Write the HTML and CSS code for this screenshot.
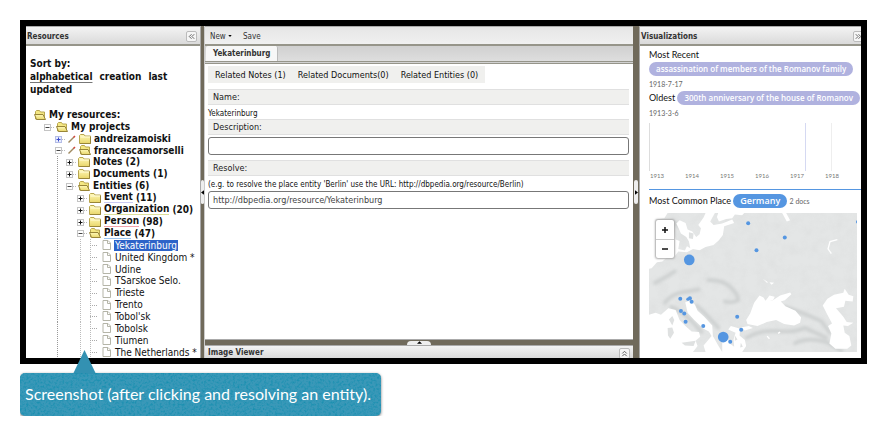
FILE: index.html
```html
<!DOCTYPE html>
<html lang="en">
<head>
<meta charset="utf-8">
<title>Yekaterinburg</title>
<link rel="stylesheet" href="styles.css">
</head>
<body>
<svg class="defs" aria-hidden="true">
  <defs>
    <linearGradient id="fold" x1="0" y1="0" x2="0" y2="1"><stop offset="0" stop-color="#fff9b8"/><stop offset="1" stop-color="#e8d66a"/></linearGradient>
    <symbol id="closed" viewBox="0 0 12 10"><path d="M.5 9.500V1.500L1.500.5H5L6 2H11.500V9.500Z" fill="url(#fold)" stroke="#b8a650"/><path d="M1.500 3H11" stroke="#fffbd8"/><path d="M1 9.500H11.500V3" fill="none" stroke="#988538"/></symbol>
    <symbol id="open" viewBox="0 0 12 10"><path d="M1.500 9V1.500L2.500.5H5.500L6.500 2H10.500V9Z" fill="#f4e782" stroke="#b8a650"/><path d="M.5 4.500H9L11.500 9.500H2.500Z" fill="url(#fold)" stroke="#988538"/></symbol>
    <symbol id="page" viewBox="0 0 10 10"><path d="M1 .5H6L8.500 3V9.500H1Z" fill="#fff" stroke="#b5b5a8"/><path d="M5.500.5V3.500H8.500" fill="none" stroke="#b5b5a8"/></symbol>
    <symbol id="plus" viewBox="0 0 12 10"><path d="M8 5.500H12" stroke="#bbb" stroke-dasharray="1 1"/><rect x="1.500" y="2.500" width="6" height="6" fill="#fff" stroke="#c4c4c4"/><path d="M2.500 5.500H6.500M4.500 3.500V7.500" stroke="#111"/></symbol>
    <symbol id="plusblue" viewBox="0 0 12 10"><path d="M8 5.500H12" stroke="#bbb" stroke-dasharray="1 1"/><rect x="1.500" y="2.500" width="6" height="6" fill="#e8ecff" stroke="#b4bde6"/><path d="M2.500 5.500H6.500M4.500 3.500V7.500" stroke="#3a4ccc"/></symbol>
    <symbol id="minus" viewBox="0 0 12 10"><path d="M8 5.500H12" stroke="#bbb" stroke-dasharray="1 1"/><rect x="1.500" y="2.500" width="6" height="6" fill="#fff" stroke="#c4c4c4"/><path d="M2.500 5.500H6.500" stroke="#444"/></symbol>
    <symbol id="dots" viewBox="0 0 12 10"><path d="M1 5.500H9" stroke="#aaa" stroke-dasharray="1 1"/></symbol>
    <symbol id="pencil" viewBox="0 0 10 10"><path d="M1.500 8.500L7 3" stroke="#a08a60" stroke-width="1.500"/><path d="M6.500 3.500L8 2" stroke="#d6453c" stroke-width="1.500"/></symbol>
  </defs>
</svg>

<main class="frame">
  <aside class="panel resources">
    <header class="bar"><h2>Resources</h2><button class="tool" aria-label="Collapse resources"><svg viewBox="0 0 10 10"><path d="M5 2.500L2.500 5L5 7.500M8 2.500L5.500 5L8 7.500"/></svg></button></header>
    <div class="sort">Sort by:<br><a class="current" href="#">alphabetical</a><a href="#">creation</a><a href="#">last updated</a></div>
    <ul class="tree">
      <li class="l0"><svg class="f"><use href="#open"/></svg>My resources:</li>
      <li class="l1"><svg class="e"><use href="#minus"/></svg><svg class="f"><use href="#open"/></svg>My projects</li>
      <li class="l2"><svg class="e"><use href="#plusblue"/></svg><svg class="p"><use href="#pencil"/></svg><svg class="f"><use href="#closed"/></svg>andreizamoiski</li>
      <li class="l2"><svg class="e"><use href="#minus"/></svg><svg class="p"><use href="#pencil"/></svg><svg class="f"><use href="#open"/></svg>francescamorselli</li>
      <li class="l3"><svg class="e"><use href="#plus"/></svg><svg class="f"><use href="#closed"/></svg>Notes (2)</li>
      <li class="l3"><svg class="e"><use href="#plus"/></svg><svg class="f"><use href="#closed"/></svg>Documents (1)</li>
      <li class="l3"><svg class="e"><use href="#minus"/></svg><svg class="f"><use href="#open"/></svg>Entities (6)</li>
      <li class="l4"><svg class="e"><use href="#plus"/></svg><svg class="f"><use href="#closed"/></svg><span class="kind event">Event</span>&nbsp;(11)</li>
      <li class="l4"><svg class="e"><use href="#plus"/></svg><svg class="f"><use href="#closed"/></svg><span class="kind organization">Organization</span>&nbsp;(20)</li>
      <li class="l4"><svg class="e"><use href="#plus"/></svg><svg class="f"><use href="#closed"/></svg><span class="kind person">Person</span>&nbsp;(98)</li>
      <li class="l4"><svg class="e"><use href="#minus"/></svg><svg class="f"><use href="#open"/></svg><span class="kind place">Place</span>&nbsp;(47)</li>
      <li class="l5"><svg class="e"><use href="#dots"/></svg><svg class="p"><use href="#page"/></svg><span class="selected">Yekaterinburg</span></li>
      <li class="l5"><svg class="e"><use href="#dots"/></svg><svg class="p"><use href="#page"/></svg><span>United Kingdom *</span></li>
      <li class="l5"><svg class="e"><use href="#dots"/></svg><svg class="p"><use href="#page"/></svg><span>Udine</span></li>
      <li class="l5"><svg class="e"><use href="#dots"/></svg><svg class="p"><use href="#page"/></svg><span>TSarskoe Selo.</span></li>
      <li class="l5"><svg class="e"><use href="#dots"/></svg><svg class="p"><use href="#page"/></svg><span>Trieste</span></li>
      <li class="l5"><svg class="e"><use href="#dots"/></svg><svg class="p"><use href="#page"/></svg><span>Trento</span></li>
      <li class="l5"><svg class="e"><use href="#dots"/></svg><svg class="p"><use href="#page"/></svg><span>Tobol'sk</span></li>
      <li class="l5"><svg class="e"><use href="#dots"/></svg><svg class="p"><use href="#page"/></svg><span>Tobolsk</span></li>
      <li class="l5"><svg class="e"><use href="#dots"/></svg><svg class="p"><use href="#page"/></svg><span>Tiumen</span></li>
      <li class="l5"><svg class="e"><use href="#dots"/></svg><svg class="p"><use href="#page"/></svg><span>The Netherlands *</span></li>
    </ul>
  </aside>
  <div class="split left"><button class="grip" aria-label="Collapse left"><svg viewBox="0 0 4 6"><path d="M4 0V6L0 3Z"/></svg></button></div>

  <section class="center">
    <div class="bar menu"><button>New <svg viewBox="0 0 5 3"><path d="M0 0H5L2.500 3Z"/></svg></button><button>Save</button></div>
    <div class="tabs"><button class="tab">Yekaterinburg</button></div>
    <form class="editor">
      <div class="related"><button type="button">Related Notes (1)</button><button type="button">Related Documents(0)</button><button type="button">Related Entities (0)</button></div>
      <div class="label name">Name:</div>
      <div class="value">Yekaterinburg</div>
      <label class="label" for="description">Description:</label>
      <input id="description" type="text">
      <label class="label" for="resolve">Resolve:</label>
      <div class="hint">(e.g. to resolve the place entity 'Berlin' use the URL: http://dbpedia.org/resource/Berlin)</div>
      <input id="resolve" type="text" value="http://dbpedia.org/resource/Yekaterinburg">
    </form>
    <div class="hsplit"><button class="grip" aria-label="Expand image viewer"><svg viewBox="0 0 6 3"><path d="M0 3H6L3 0Z"/></svg></button></div>
    <div class="bar viewer"><h2>Image Viewer</h2><button class="tool" aria-label="Open image viewer"><svg viewBox="0 0 10 10"><path d="M2.500 5L5 2.500L7.500 5M2.500 8L5 5.500L7.500 8"/></svg></button></div>
  </section>
  <div class="split right"><button class="grip" aria-label="Collapse right"><svg viewBox="0 0 4 6"><path d="M0 0V6L4 3Z"/></svg></button></div>

  <aside class="panel visual">
    <header class="bar"><h2>Visualizations</h2><button class="tool" aria-label="Collapse visualizations"><svg viewBox="0 0 10 10"><path d="M2 2.500L4.500 5L2 7.500M5 2.500L7.500 5L5 7.500"/></svg></button></header>
    <div class="facts">
      <div class="line">Most Recent</div>
      <div class="line"><a class="pill" href="#">assassination of members of the Romanov family</a></div>
      <div class="date">1918-7-17</div>
      <div class="line">Oldest <a class="pill" href="#">300th anniversary of the house of Romanov</a></div>
      <div class="date last">1913-3-6</div>
      <div class="chart"><i></i><b></b><i></i></div>
      <div class="years"><span>1913</span><span>1914</span><span>1915</span><span>1916</span><span>1917</span><span>1918</span></div>
    </div>
    <div class="facts places">
      <div class="line">Most Common Place <a class="pill blue" href="#">Germany</a> <small>2 docs</small></div>
      <div class="map">
        <svg viewBox="42 40 625 418" preserveAspectRatio="xMidYMid slice" role="img" aria-label="Map of places">
          <defs>
            <filter id="soft" x="-20%" y="-20%" width="140%" height="140%"><feGaussianBlur stdDeviation="5"/></filter>
            <filter id="relief" x="0" y="0" width="100%" height="100%"><feTurbulence type="fractalNoise" baseFrequency=".03" numOctaves="4" seed="4"/><feColorMatrix values="0 0 0 0 .5  0 0 0 0 .5  0 0 0 0 .5  .5 0 0 0 -.18"/></filter>
          </defs>
          <rect x="42" y="40" width="625" height="418" fill="#e4e6e6"/>
          <rect x="42" y="40" width="625" height="418" filter="url(#relief)" opacity=".4"/>
          <g fill="none" stroke="#cdd0d0" stroke-width="11" stroke-linecap="round" filter="url(#soft)">
            <path d="M90 310Q105 288 135 280L192 270"/><path d="M220 242Q262 240 286 262T310 302Q292 312 270 306"/><path d="M108 322Q140 335 170 365L200 398"/><path d="M185 318Q220 350 250 385"/><path d="M450 322Q500 338 560 365L585 400"/><path d="M335 415Q380 390 430 395T510 385L575 415"/><path d="M480 432Q520 410 580 430L620 455"/><path d="M60 250Q90 235 120 215"/><path d="M98 75Q120 65 135 82"/>
          </g>
          <g fill="#fff">
            <path d="M42 40H98L88 56L62 60L64 100L118 98L122 120L134 124L130 148L150 153L156 140L166 146L162 126L154 112L138 102L132 88L124 72L134 62L152 70L158 90L172 96L184 112L194 104L198 86L190 76L206 54L212 40H240L226 66L236 76L262 72L292 60L298 70L268 80L264 106L252 122L236 136L212 142L194 152L174 148L156 158L130 156L118 172L96 174L82 186L66 188L50 206L42 208Z"/>
            <path d="M250 40H328L322 47L300 45L292 56L274 58L252 66L246 52ZM442 40H454L466 62L456 66Z"/>
            <path d="M346 342L358 310L374 288L386 294L392 304L412 304L436 288L466 279L470 284L450 302L438 306L452 320L482 334L499 354L496 370L478 378L448 374L424 362L396 368L368 380L338 374L334 362Z"/>
            <path d="M390 307L404 288L420 292L414 303ZM384 238L400 248L396 250ZM404 248L418 250L410 256Z"/>
            <path d="M564 318L578 298L598 286L626 280L630 268L642 286L656 290L654 306L632 304L628 322L604 326L626 352L636 368L656 370L640 380L626 378L630 400L644 410L650 438L638 448L602 448L584 432L590 402L580 380L592 372L578 346Z"/>
            <path d="M151 308L166 303L180 316L188 334L208 352L232 378L234 410L250 438L262 458H212L206 438L230 410L222 396L206 388L178 362L158 340Z"/>
            <path d="M42 346L62 340L78 346L100 326L122 332L134 362L150 378L170 396L192 398L196 412L182 424L188 440L174 458H42Z"/>
            <path d="M262 400L276 410L284 432L298 442L296 420L302 400L280 390L288 380L316 388L314 408L330 422L334 440L322 458H262ZM318 384L342 380L354 386L330 393Z"/>
          </g>
          <path d="M102 360L112 350L118 362L112 378ZM98 386L112 384L117 400L106 418L99 408ZM140 430L182 424L176 440L150 438ZM162 98L176 102L174 118L162 116ZM300 408L308 420L300 424ZM318 430L324 442L316 444Z" fill="#dfe1e1"/>
          <path d="M608 120L586 126L580 148L590 162M397 410L404 418M430 402L436 398" fill="none" stroke="#fff" stroke-width="4"/>
          <g fill="#5596e1"><circle cx="163" cy="181" r="16"/><circle cx="265" cy="413" r="16"/><circle cx="340" cy="71" r="6"/><circle cx="450" cy="114" r="6"/><circle cx="365" cy="152" r="6"/><circle cx="136" cy="298" r="6"/><circle cx="159" cy="299" r="5"/><circle cx="165" cy="296" r="6"/><circle cx="170" cy="307" r="6"/><circle cx="138" cy="335" r="6"/><circle cx="148" cy="342" r="6"/><circle cx="152" cy="367" r="6"/><circle cx="205" cy="380" r="6"/><circle cx="307" cy="352" r="6"/><circle cx="319" cy="391" r="6"/><circle cx="286" cy="427" r="6"/><circle cx="669" cy="67" r="5"/></g>
        </svg>
        <div class="zoom"><button aria-label="Zoom in"><svg viewBox="0 0 8 8"><path d="M1 4H7M4 1V7"/></svg></button><button aria-label="Zoom out"><svg viewBox="0 0 8 8"><path d="M1 4H7"/></svg></button></div>
      </div>
    </div>
  </aside>
</main>

<div class="callout">
  <svg class="texture" aria-hidden="true"><filter id="grain" x="0" y="0" width="100%" height="100%"><feTurbulence type="fractalNoise" baseFrequency=".45" numOctaves="2"/><feColorMatrix values="0 0 0 0 0  0 0 0 0 .25  0 0 0 0 .4  1.400 0 0 0 -.6"/></filter><rect width="100%" height="100%" filter="url(#grain)"/></svg>
  <p>Screenshot (after clicking and resolving an entity).</p>
</div>
</body>
</html>
```
FILE: styles.css
```css
* { box-sizing: border-box; }
body { margin: 20px 21px 0 20px; background: #fff; color: #111; font: 9px/12px "DejaVu Sans Condensed", "DejaVu Sans", sans-serif; }
button { margin: 0; padding: 0; border: 0; background: none; color: inherit; font: inherit; }
a { color: inherit; text-decoration: none; }
h2 { margin: 0; font-size: 8px; color: #333; }
.defs { position: absolute; width: 0; height: 0; }

.frame { display: grid; grid-template-columns: 174px 4px minmax(0, 1fr) 7px 221px; height: calc(100vh - 85px); border: 6px solid #000; background: #706a5b; overflow: hidden; }
.panel { display: flex; flex-direction: column; min-width: 0; min-height: 0; background: #fff; overflow: hidden; }
.bar { display: flex; align-items: center; justify-content: space-between; flex: none; height: 20px; padding: 2px 0 0 1px; border-top: 1px solid #aaa; border-bottom: 2px solid #96958a; background: linear-gradient(#f3f3f3, #dadada); }
.tool { width: 11px; height: 11px; margin-right: 3px; border: 1px solid #bbb; border-radius: 2px; background: #f5f5f5; }
.tool svg { display: block; width: 9px; height: 9px; fill: none; stroke: #555; }

.sort { padding: 11px 14px 0 4px; font-size: 10px; line-height: 13px; font-weight: bold; }
.sort a { margin-right: 7px; }
.sort .current { text-decoration: underline; text-decoration-color: #777; text-underline-offset: 2px; }
.tree { display: grid; grid-auto-rows: minmax(0, 1fr); flex: 1; min-height: 0; margin: 13px 0 0; padding: 0; list-style: none; font-size: 10px; font-weight: bold; white-space: nowrap; }
.tree li { display: flex; align-items: center; background-repeat: no-repeat; }
.tree svg { flex: none; height: 10px; }
.e { width: 14px; }
.f { width: 12px; margin-right: 3px; }
.p { width: 10px; margin-right: 2px; }
.l0 { padding-left: 8px; }
.l1 { padding-left: 16px; }
.l2 { padding-left: 27px; }
.l3 { padding-left: 38px; }
.l4 { padding-left: 49px; }
.l5 { padding-left: 62px; font-weight: normal; }
.l3, .l4, .l5 { background-image: repeating-linear-gradient(#999 0 1px, transparent 1px 2px), repeating-linear-gradient(#bbb 0 1px, transparent 1px 2px), repeating-linear-gradient(#bbb 0 1px, transparent 1px 2px); background-size: 1px 100%, 0 0, 0 0; background-position: 31px 0, 54px 0, 64px 0; }
.l5 { background-size: 1px 100%; }
.kind { height: 11px; line-height: 10px; border-bottom: 1px solid; }
.event { border-color: #c9c9f2; }
.organization { border-color: #dcdf9a; }
.person { border-color: #f2a3ad; }
.place { border-color: #9bc4ee; }
.l5 span { padding: 0 1px; line-height: 11px; }
.tree .selected { background: #2d63c8; color: #fff; }

.split { display: flex; align-items: center; justify-content: center; }
.split .grip { display: flex; align-items: center; justify-content: center; height: 24px; width: 4px; border-radius: 3px; background: #eee; }
.split svg { width: 3px; height: 5px; }
.split.left { border-left: 1px solid #aaa; }
.split.right { border-right: 1px solid #aaa; }

.center { display: flex; flex-direction: column; min-width: 0; border-left: 1px solid #ccc; background: #fff; }
.menu { justify-content: flex-start; gap: 11px; padding-left: 5px; background: linear-gradient(#e6e6e6, #f0f0f0); font-size: 8px; color: #333; }
.menu svg { width: 4px; height: 2px; vertical-align: middle; }
.tabs { display: flex; align-items: flex-end; height: 18px; padding-left: 1px; border-bottom: 3px double #96958a; background: linear-gradient(#d0d0d0, #dedede); }
.tab { height: 15px; padding: 0 7px; border-radius: 2px 2px 0 0; background: #f7f7f7; font-size: 8px; font-weight: bold; color: #333; border-right: 1px solid #bbb; }
.editor { display: flex; flex-direction: column; flex: 1; min-height: 0; padding: 2px 4px 0 3px; }
.related { display: flex; align-self: flex-start; gap: 12px; height: 17px; padding: 0 7px; background: #f0f0ee; }
.label { height: 16px; padding: 0 5px; border: 1px solid #e0e0e0; border-width: 1px 0; background: #f0f0ee; line-height: 14px; color: #222; }
.name { margin-top: 6px; }
.value { margin-top: 3px; height: 11px; line-height: 12px; font-size: 8px; }
.editor input { width: 100%; height: 18px; margin: 2px 0 5px; padding: 0 4px; border: 1px solid #777; border-radius: 3px; background: #fff; color: #444; font: inherit; }
.hint { margin-top: 3px; line-height: 12px; font-size: 8px; }
.hint + input { margin-top: 0; }
.hsplit { display: flex; justify-content: center; align-items: flex-end; height: 6px; background: #706a5b; border-top: 1px solid #aaa; }
.hsplit .grip { display: flex; justify-content: center; width: 24px; height: 4px; border-radius: 4px 4px 0 0; background: #eee; }
.hsplit svg { width: 5px; height: 3px; }
.viewer { height: 13px; padding-left: 3px; border-bottom: 0; }

.visual { font-family: Lato, "Open Sans", sans-serif; }
.visual h2 { font-family: "DejaVu Sans Condensed", sans-serif; }
.visual .tool { margin-right: -3px; }
.facts { padding: 2px 3px 0 9px; white-space: nowrap; }
.line { height: 14px; line-height: 14px; }
.pill { display: inline-block; height: 14px; padding: 0 7px; border-radius: 7px; background: #b0b2df; color: #fff; font: 600 8px/13px "Open Sans", sans-serif; }
.blue { background: #5596e1; font-size: 9px; }
.date { height: 15px; line-height: 17px; font-size: 7px; color: #666; }
.last { height: 18px; }
.chart { display: grid; grid-template-columns: 155px 26px 1fr; height: 48px; border-left: 1px solid #ddd; }
.chart b { border-left: 1px solid #d5d9f2; }
.chart i + b + i { border-left: 1px solid #eee; }
.years { display: grid; grid-template-columns: repeat(6, 35px); height: 18px; padding-left: 1px; line-height: 10px; font-size: 6px; color: #777; }
.places { border-top: 1px solid #5596e1; margin-left: 9px; padding: 4px 4px 0 0; }
.places small { font-size: 7px; color: #666; }
.map { position: relative; height: 139px; margin-top: 5px; }
.map > svg { display: block; width: 100%; height: 100%; }
.zoom { position: absolute; left: 7px; top: 7px; width: 18px; border-radius: 2px; background: #fff; box-shadow: 0 0 2px 1px #aaa; }
.zoom button { display: flex; align-items: center; justify-content: center; width: 18px; height: 19px; }
.zoom button + button { border-top: 1px solid #ccc; }
.zoom svg { width: 8px; height: 8px; fill: none; stroke: #111; stroke-width: 1.500; }

.callout { position: relative; width: 361px; max-width: 100%; margin-top: 9px; border-radius: 5px; background: #3a98b8; box-shadow: 0 1px 3px #777; color: #fff; }
.callout::before { content: ""; position: absolute; left: 53px; top: -23px; width: 23px; height: 24px; background: #3391b2; clip-path: polygon(50% 0, 100% 100%, 0 100%); }
.callout p { position: relative; margin: 0; padding: 9px 5px 10px; font: 16px/24px Lato, "Open Sans", sans-serif; white-space: nowrap; }
.texture { position: absolute; inset: 0; width: 100%; height: 100%; border-radius: 5px; }
```
